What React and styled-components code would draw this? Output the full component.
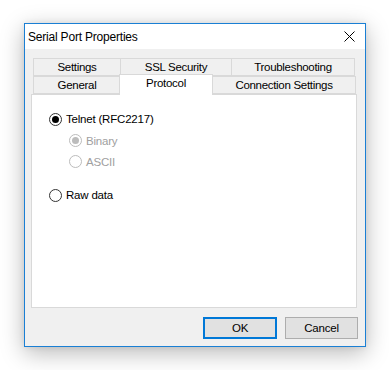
import React from "react";
import styled, { createGlobalStyle } from "styled-components";

const Global = createGlobalStyle`
  html, body { margin: 0; padding: 0; background: #ffffff; }
  body { font-family: "Liberation Sans", Arial, sans-serif; font-size: 11.5px; color: #000; }
`;

const Stage = styled.div`
  padding: 23px 0 0 24px;
  height: 370px;
  box-sizing: border-box;
`;

const Window = styled.div`
  width: 342px;
  height: 324px;
  box-sizing: border-box;
  border: 1px solid #1a7fd4;
  background: #f0f0f0;
  display: flex;
  flex-direction: column;
  box-shadow: 0 6px 22px rgba(0, 0, 0, 0.28), 0 0 6px rgba(0, 0, 0, 0.08);
`;

const TitleBar = styled.div`
  height: 25px;
  background: #ffffff;
  display: flex;
  align-items: center;
  justify-content: space-between;
  padding: 0 10px 0 3px;
  font-size: 12px;
  letter-spacing: -0.2px;
`;

const CloseButton = styled.div`
  width: 12px;
  height: 12px;
  display: flex;
  align-items: center;
  justify-content: center;
`;

const Body = styled.div`
  flex: 1;
  display: flex;
  flex-direction: column;
  padding: 9px 8px 7px 6px;
`;

const TabStrip = styled.div`
  margin: 0 1px 0 2px;
  display: flex;
  flex-direction: column;
`;

const TabRow = styled.div`
  display: flex;
  height: 18px;
  align-items: flex-end;
`;

const Tab = styled.div`
  box-sizing: border-box;
  height: ${(p) => (p.$active ? "21px" : "18px")};
  border: 1px solid #d9d9d9;
  border-bottom: ${(p) => (p.$active ? "none" : "1px solid #d9d9d9")};
  margin: ${(p) => (p.$active ? "0 0 -1px -2px" : "0 0 0 -1px")};
  background: ${(p) => (p.$active ? "#ffffff" : "#f0f0f0")};
  position: relative;
  z-index: ${(p) => (p.$active ? 2 : 1)};
  display: flex;
  align-items: ${(p) => (p.$active ? "flex-start" : "center")};
  padding-top: ${(p) => (p.$active ? "2px" : "0")};
  justify-content: center;
  white-space: nowrap;
  letter-spacing: -0.3px;
  &:first-child { margin-left: 0; }
`;

const Panel = styled.div`
  height: 214px;
  box-sizing: border-box;
  border: 1px solid #d9d9d9;
  background: #ffffff;
  position: relative;
  z-index: 1;
  padding: 13px 0 0 17px;
  display: flex;
  flex-direction: column;
`;

const OptionRow = styled.label`
  display: flex;
  align-items: center;
  gap: 4px;
  height: ${(p) => p.$h || 21}px;
  margin-left: ${(p) => (p.$indent ? "20px" : "0")};
  margin-top: ${(p) => p.$mt || 0}px;
  color: ${(p) => (p.$disabled ? "#a0a0a0" : "#000")};
  letter-spacing: -0.2px;
`;

const RadioCircle = styled.span`
  width: 13px;
  height: 13px;
  box-sizing: border-box;
  border-radius: 50%;
  border: 1px solid ${(p) => (p.$disabled ? "#bcbcbc" : "#333333")};
  background: #ffffff;
  display: flex;
  align-items: center;
  justify-content: center;
  flex: none;
  &::after {
    content: "";
    width: 7px;
    height: 7px;
    border-radius: 50%;
    background: ${(p) => (p.$disabled ? "#bcbcbc" : "#000000")};
    display: ${(p) => (p.$checked ? "block" : "none")};
  }
`;

const ButtonRow = styled.div`
  margin-top: 9px;
  display: flex;
  justify-content: flex-end;
  gap: 8px;
  margin-right: -1px;
`;

const Button = styled.button`
  width: ${(p) => p.$w}px;
  height: 22px;
  box-sizing: border-box;
  background: #e1e1e1;
  border: ${(p) => (p.$default ? "2px solid #0078d7" : "1px solid #adadad")};
  font-family: inherit;
  font-size: 11.5px;
  color: #000;
  padding: 0;
  letter-spacing: -0.2px;
`;

const Radio = ({ label, checked, disabled, indent, h, mt }) => (
  <OptionRow $disabled={disabled} $indent={indent} $h={h} $mt={mt}>
    <RadioCircle $checked={checked} $disabled={disabled} />
    <span>{label}</span>
  </OptionRow>
);

const row1 = [
  { label: "Settings", w: 88 },
  { label: "SSL Security", w: 112 },
  { label: "Troubleshooting", w: 124 },
];
const row2 = [
  { label: "General", w: 88 },
  { label: "Protocol", w: 94, active: true },
  { label: "Connection Settings", w: 144 },
];

export default function App() {
  return (
    <>
      <Global />
      <Stage>
        <Window>
          <TitleBar>
            <span>Serial Port Properties</span>
            <CloseButton>
              <svg width="11" height="11" viewBox="0 0 11 11">
                <path d="M0.5 0.5 L10.5 10.5 M10.5 0.5 L0.5 10.5" stroke="#000" strokeWidth="1" />
              </svg>
            </CloseButton>
          </TitleBar>
          <Body>
            <TabStrip>
              <TabRow>
                {row1.map((t) => (
                  <Tab key={t.label} style={{ width: t.w }}>{t.label}</Tab>
                ))}
              </TabRow>
              <TabRow>
                {row2.map((t) => (
                  <Tab key={t.label} $active={t.active} style={{ width: t.w }}>
                    {t.label}
                  </Tab>
                ))}
              </TabRow>
            </TabStrip>
            <Panel>
              <Radio label="Telnet (RFC2217)" checked h={22} />
              <Radio label="Binary" checked disabled indent />
              <Radio label="ASCII" disabled indent />
              <Radio label="Raw data" h={22} mt={12} />
            </Panel>
            <ButtonRow>
              <Button $default $w={74}>OK</Button>
              <Button $w={73}>Cancel</Button>
            </ButtonRow>
          </Body>
        </Window>
      </Stage>
    </>
  );
}
